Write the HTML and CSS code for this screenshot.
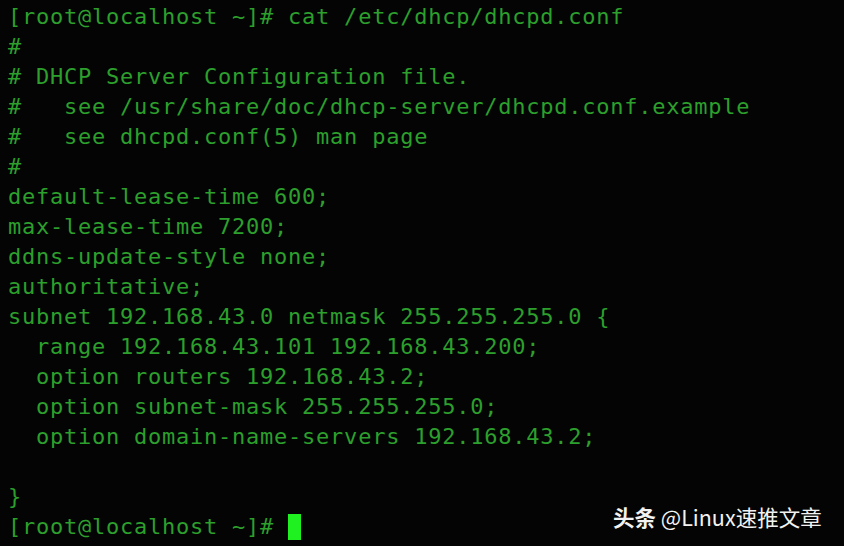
FILE: index.html
```html
<!DOCTYPE html>
<html>
<head>
<meta charset="utf-8">
<link rel="stylesheet" href="styles.css">
</head>
<body>
<main class="term">
<pre class="screen">[root@localhost ~]# cat /etc/dhcp/dhcpd.conf
#
# DHCP Server Configuration file.
#   see /usr/share/doc/dhcp-server/dhcpd.conf.example
#   see dhcpd.conf(5) man page
#
default-lease-time 600;
max-lease-time 7200;
ddns-update-style none;
authoritative;
subnet 192.168.43.0 netmask 255.255.255.0 {
  range 192.168.43.101 192.168.43.200;
  option routers 192.168.43.2;
  option subnet-mask 255.255.255.0;
  option domain-name-servers 192.168.43.2;

}
[root@localhost ~]# <span class="cursor"></span></pre>
<div class="mark"><b class="brand">头条</b> @Linux速推文章</div>
</main>
</body>
</html>
```
FILE: styles.css
```css
html, body {
  margin: 0;
  padding: 0;
  background: #030403;
  width: 844px;
  height: 546px;
  overflow: hidden;
}
.term {
  position: relative;
  width: 844px;
  height: 546px;
  box-sizing: border-box;
  padding: 2px 0 0 8px;
}
.screen {
  margin: 0;
  font-family: "DejaVu Sans Mono", "Liberation Mono", monospace;
  font-size: 22px;
  letter-spacing: 0.76px;
  line-height: 30px;
  color: #2c9f2c;
  white-space: pre;
}
.cursor {
  display: inline-block;
  width: 13px;
  height: 26px;
  background: #1ff01f;
  vertical-align: -6px;
}
.mark {
  position: absolute;
  left: 613px;
  top: 503px;
  font-family: "Noto Sans CJK SC", "Noto Sans", sans-serif;
  font-size: 21.5px;
  line-height: 28px;
  color: #f2f2f2;
  white-space: nowrap;
}
.brand {
  font-weight: 700;
}
```
